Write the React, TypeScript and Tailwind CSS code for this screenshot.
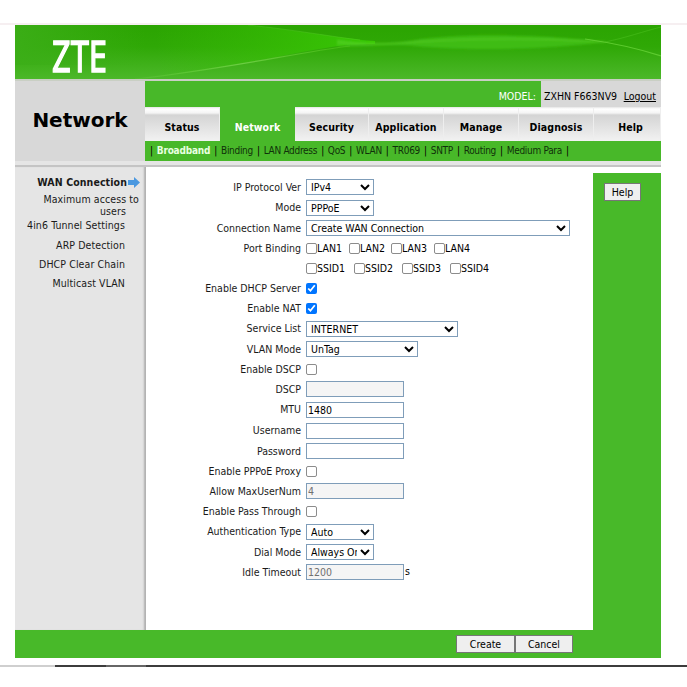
import React from "react";

const font = "font-['DejaVu_Sans_Condensed','DejaVu_Sans',sans-serif] font-stretch-condensed";
const tabs = [
  { t: "Status", w: "w-[75px]" },
  { t: "Network", w: "w-[75px]", on: true },
  { t: "Security", w: "w-[74px]" },
  { t: "Application", w: "w-[75px]" },
  { t: "Manage", w: "w-[75px]" },
  { t: "Diagnosis", w: "w-[75px]" },
  { t: "Help", w: "w-[67px] pl-[7px]" },
];
const subs = ["Broadband", "Binding", "LAN Address", "QoS", "WLAN", "TR069", "SNTP", "Routing", "Medium Para"];

function Banner() {
  return (
    <div className="relative h-[54px] w-[646px]">
      <svg width="646" height="54" viewBox="0 0 646 54" className="block">
        <defs>
          <linearGradient id="g" x1="0" y1="0" x2="0" y2="1">
            <stop offset="0" stopColor="#2ba401" />
            <stop offset="0.4" stopColor="#2fa806" />
            <stop offset="1" stopColor="#4cb82a" />
          </linearGradient>
          <linearGradient id="l" x1="0" y1="0" x2="1" y2="0">
            <stop offset="0" stopColor="#38c204" stopOpacity="0" />
            <stop offset="0.45" stopColor="#38c204" stopOpacity="0.45" />
            <stop offset="1" stopColor="#38c804" stopOpacity="1" />
          </linearGradient>
          <linearGradient id="lc" x1="0" y1="0" x2="1" y2="0">
            <stop offset="0" stopColor="#3cae18" stopOpacity="0.9" />
            <stop offset="1" stopColor="#3cae18" stopOpacity="0" />
          </linearGradient>
          <linearGradient id="e" x1="0" y1="0" x2="1" y2="0">
            <stop offset="0" stopColor="#8be060" stopOpacity="0.1" />
            <stop offset="0.5" stopColor="#8be060" stopOpacity="0.6" />
            <stop offset="1" stopColor="#6fdc30" stopOpacity="0.3" />
          </linearGradient>
          <filter id="b" x="-5%" y="-50%" width="110%" height="200%">
            <feGaussianBlur stdDeviation="0.9" />
          </filter>
        </defs>
        <rect width="646" height="54" fill="url(#g)" />
        <rect width="130" height="40" fill="url(#lc)" />
        <path d="M147 52C220 41 280 27 330 20C340 19 350 19 360 19V16C340 15 300 8 233 0H140Z" fill="url(#l)" />
        <path d="M120 54C210 44 280 28 335 21" stroke="url(#e)" strokeWidth="1.2" fill="none" />
        <path d="M233 0C280 5 320 12 345 15" stroke="#5fd030" strokeOpacity="0.35" strokeWidth="1" fill="none" />
        <g filter="url(#b)">
          <path d="M322 14C350 19 372 20 400 15C440 9 520 8 590 17C530 25 450 26 400 21C372 18 350 23 322 21Z" fill="#4dcc20" fillOpacity="0.55" />
          <path d="M322 17C350 20 372 19 400 17C460 13 530 13 590 17" stroke="#6fe038" strokeOpacity="0.5" strokeWidth="1" fill="none" />
        </g>
        <path d="M570 14C605 19 628 25 646 31" stroke="#6fd83f" strokeOpacity="0.7" strokeWidth="1.2" fill="none" />
        <path d="M590 17C610 13 630 6 646 2" stroke="#5fd030" strokeOpacity="0.35" strokeWidth="1" fill="none" />
      </svg>
      <span className="absolute left-[37px] top-[9px] origin-left scale-x-[0.76] font-['Noto_Sans'] text-[43px] leading-none text-white font-stretch-normal [-webkit-text-stroke:1.4px_white]">ZTE</span>
    </div>
  );
}

function Row({ label, h = "h-[20px]", children }: { label?: string; h?: string; children: React.ReactNode }) {
  return (
    <div className={`flex items-center ${h}`}>
      <label className="w-[160px] pr-[5px] text-right text-[#1a1a1a] whitespace-nowrap">{label}</label>
      <div className="flex items-center">{children}</div>
    </div>
  );
}
const sel = "h-[16px] border border-[#7f9db9] bg-white text-[10.5px] text-black leading-none";
const inp = "h-[16px] w-[98px] border border-[#7f9db9] px-[1px] text-[10.5px] outline-none";
const Sel = ({ w, v }: { w: string; v: string }) => (
  <select className={`${sel} ${w}`} defaultValue={v}>
    <option>{v}</option>
  </select>
);
const Chk = ({ on, l, w }: { on?: boolean; l?: string; w?: string }) => (
  <span className={`flex items-center ${w ?? ""}`}>
    {on ? (
      <input type="checkbox" defaultChecked className="m-0 h-[11px] w-[11px]" />
    ) : (
      <input type="checkbox" className="m-0 h-[11px] w-[11px] appearance-none rounded-[2px] border border-[#8c8c8c] bg-white" />
    )}
    {l && <span>{l}</span>}
  </span>
);

export default function App() {
  return (
    <div className={`h-[687px] w-[687px] overflow-hidden bg-white text-[10.5px] leading-none text-black ${font}`}>
      <div className="mt-[23px] h-[2px] bg-[#f6eff1]" />
      <div className="ml-[15px] w-[646px]">
        <Banner />
        <div className="h-[2px] bg-[#c9cfc4]" />
        <div className="flex h-[80px]">
          <div className="flex w-[130px] items-center justify-center bg-[#d8d8d8] pb-[3px] font-['DejaVu_Sans'] text-[20px] font-bold font-stretch-normal">Network</div>
          <div className="flex-1">
            <div className="flex h-[26px]">
              <div className="flex w-[396px] items-end justify-end bg-[#48b829] pb-[6px] pr-[5px] text-white">MODEL:</div>
              <div className="flex flex-1 items-end justify-between bg-[#d8d8d8] pb-[6px] pl-[3px] pr-[5px] whitespace-nowrap">
                <span>ZXHN F663NV9</span>
                <span className="underline">Logout</span>
              </div>
            </div>
            <div className="flex h-[34px] tracking-[0.1px]">
              {tabs.map((t) =>
                t.on ? (
                  <div key={t.t} className={`${t.w} flex items-center justify-center bg-[#48b829] pt-[7px] font-bold text-white`}>{t.t}</div>
                ) : (
                  <div key={t.t} className={`${t.w} flex items-center justify-center border-r border-r-[#eeeeee] bg-[linear-gradient(#e4e4e4_0,#ffffff_2px,#f4f4f4_6px,#d4d4d4_8px,#f2f2f2_100%)] pt-[7px] font-bold`}>{t.t}</div>
                ),
              )}
            </div>
            <div className="flex h-[20px] items-center bg-[#48b829] pl-[5px] text-[10px] tracking-[-0.3px] whitespace-nowrap">
              <span>|</span>
              {subs.map((s, i) => (
                <React.Fragment key={s}>
                  <span className={`ml-[4px] ${i === 0 ? "font-bold tracking-[-0.2px] text-[#e8ffe0]" : "text-[#10300a]"}`}>{s}</span>
                  <span className="ml-[4px]">|</span>
                </React.Fragment>
              ))}
            </div>
          </div>
        </div>
        <div className="h-[6px] border-b-2 border-b-[#c4c4c4] bg-[#e5e5e5]" />
        <div className="flex h-[463px]">
          <div className="flex w-[131px] flex-col bg-[#e5e5e5] pt-[8px] text-right tracking-[0.1px] text-[#1a1a1a] shadow-[inset_-3px_0_2px_-1px_#b0b0b0]">
            <div className="flex h-[15px] items-center justify-end pr-[6px] font-bold">
              WAN Connection
              <svg width="12" height="11" viewBox="0 0 12 11" className="ml-[1px]">
                <path d="M0 3H6V0L12 5.5L6 11V8H0Z" fill="#4a98e0" />
              </svg>
            </div>
            <div className="ml-auto mt-[3px] w-[125px] pr-[7px] leading-[12px]">
              Maximum access to<br /><span className="pr-[13px]">users</span>
            </div>
            <div className="mt-[1px] h-[20px] pr-[21px] leading-[14px]">4in6 Tunnel Settings</div>
            <div className="h-[19px] pr-[21px] leading-[14px]">ARP Detection</div>
            <div className="h-[19px] pr-[21px] leading-[14px]">DHCP Clear Chain</div>
            <div className="h-[19px] pr-[21px] leading-[14px]">Multicast VLAN</div>
          </div>
          <div className="flex w-[447px] flex-col bg-white pt-[10px]">
            <Row label="IP Protocol Ver"><Sel w="w-[68px]" v="IPv4" /></Row>
            <Row label="Mode" h="h-[21px]"><Sel w="w-[68px]" v="PPPoE" /></Row>
            <Row label="Connection Name"><Sel w="w-[264px]" v="Create WAN Connection" /></Row>
            <Row label="Port Binding">
              <Chk l="LAN1" w="w-[43px]" /><Chk l="LAN2" w="w-[42px]" /><Chk l="LAN3" w="w-[43px]" /><Chk l="LAN4" />
            </Row>
            <Row>
              <Chk l="SSID1" w="w-[48px]" /><Chk l="SSID2" w="w-[48px]" /><Chk l="SSID3" w="w-[48px]" /><Chk l="SSID4" />
            </Row>
            <Row label="Enable DHCP Server"><Chk on /></Row>
            <Row label="Enable NAT"><Chk on /></Row>
            <Row label="Service List" h="h-[21px]"><Sel w="w-[152px]" v="INTERNET" /></Row>
            <Row label="VLAN Mode"><Sel w="w-[112px]" v="UnTag" /></Row>
            <Row label="Enable DSCP"><Chk /></Row>
            <Row label="DSCP"><input disabled className={`${inp} bg-[#f5f5f5]`} /></Row>
            <Row label="MTU" h="h-[21px]"><input readOnly value="1480" className={inp} /></Row>
            <Row label="Username" h="h-[21px]"><input readOnly className={inp} /></Row>
            <Row label="Password"><input readOnly className={inp} /></Row>
            <Row label="Enable PPPoE Proxy"><Chk /></Row>
            <Row label="Allow MaxUserNum"><input disabled value="4" className={`${inp} bg-[#f5f5f5] text-[#707070]`} /></Row>
            <Row label="Enable Pass Through"><Chk /></Row>
            <Row label="Authentication Type" h="h-[21px]"><Sel w="w-[68px]" v="Auto" /></Row>
            <Row label="Dial Mode"><Sel w="w-[68px]" v="Always On" /></Row>
            <Row label="Idle Timeout">
              <input disabled value="1200" className={`${inp} bg-[#f5f5f5] text-[#707070]`} />
              <span className="ml-[1px] -translate-y-[1px]">s</span>
            </Row>
          </div>
          <div className="flex-1 bg-white pt-[6px]">
            <div className="h-[457px] bg-[#48b929] pl-[11px] pt-[10px]">
              <button className="h-[18px] w-[37px] border border-[#767676] bg-[#efefef] text-black">Help</button>
            </div>
          </div>
        </div>
        <div className="flex h-[28px] items-center bg-[#48b929] pl-[441px]">
          <button className="h-[18px] w-[59px] border border-[#767676] bg-[#efefef]">Create</button>
          <button className="h-[18px] w-[58px] border border-[#767676] bg-[#efefef]">Cancel</button>
        </div>
      </div>
      <div className="mt-[7px] flex h-[2px]">
        <div className="w-[55px] bg-[#cfcfcf]" />
        <div className="w-[51px] bg-[#3c3c3c]" />
        <div className="w-[40px] bg-[#666666]" />
        <div className="flex-1 bg-[#3c3c3c]" />
      </div>
    </div>
  );
}
